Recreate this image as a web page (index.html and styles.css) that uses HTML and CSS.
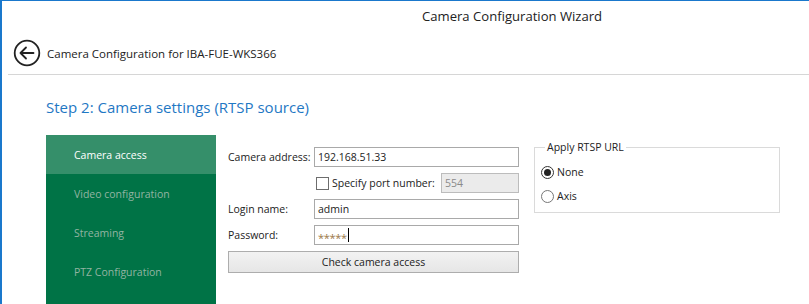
FILE: index.html
```html
<!DOCTYPE html>
<html>
<head>
<meta charset="utf-8">
<link rel="stylesheet" href="styles.css">
</head>
<body>
<div class="window">
  <div class="titlebar">Camera Configuration Wizard</div>
  <div class="nav">
    <svg class="back" width="28" height="28" viewBox="0 0 28 28">
      <circle cx="14" cy="14" r="12.3" fill="none" stroke="#222" stroke-width="1.8"/>
      <path d="M7.5 14 H20.5 M13 8.5 L7.5 14 L13 19.5" fill="none" stroke="#222" stroke-width="1.8" stroke-linecap="round" stroke-linejoin="round"/>
    </svg>
    <span class="nav-title">Camera Configuration for IBA-FUE-WKS366</span>
  </div>
  <div class="separator"></div>
  <div class="content">
    <h1 class="step">Step 2: Camera settings (RTSP source)</h1>
    <div class="body">
      <ul class="sidebar">
        <li class="item active">Camera access</li>
        <li class="item">Video configuration</li>
        <li class="item">Streaming</li>
        <li class="item">PTZ Configuration</li>
      </ul>
      <div class="form">
        <label class="label">Camera address:</label>
        <div class="input">192.168.51.33</div>
        <div class="port-row">
          <span class="checkbox"></span>
          <span class="port-label">Specify port number:</span>
          <div class="input disabled port">554</div>
        </div>
        <label class="label">Login name:</label>
        <div class="input">admin</div>
        <label class="label">Password:</label>
        <div class="input"><span class="pw">*****</span><span class="caret"></span></div>
        <button class="btn">Check camera access</button>
      </div>
      <fieldset class="group">
        <legend class="legend">Apply RTSP URL</legend>
        <div class="radio-row"><span class="radio checked"></span><span>None</span></div>
        <div class="radio-row"><span class="radio"></span><span>Axis</span></div>
      </fieldset>
    </div>
  </div>
</div>
</body>
</html>
```
FILE: styles.css
```css
* { box-sizing: border-box; }
html, body { margin: 0; padding: 0; background: #fff; }
body {
  font-family: "Open Sans", "Noto Sans", sans-serif;
  font-size: 10.5px;
  color: #222;
  overflow: hidden;
}
.window {
  height: 304px;
  border-top: 1px solid #1a78cc;
  border-left: 2px solid #1a78cc;
  display: flex;
  flex-direction: column;
}
.titlebar {
  height: 31px;
  padding: 6px 0 0 420px;
  font-size: 13.1px;
  line-height: 19px;
  color: #222;
  white-space: nowrap;
}
.nav {
  height: 42px;
  display: flex;
  align-items: center;
  padding-left: 11px;
  gap: 6px;
}
.back { display: block; flex: none; }
.nav-title { font-size: 11.5px; color: #222; white-space: nowrap; }
.separator {
  margin-left: 6px;
  border-top: 1px solid #d6d6d6;
}
.content {
  flex: 1;
  display: flex;
  flex-direction: column;
  padding-left: 44px;
}
.step {
  margin: 21px 0 17px 0;
  font-size: 15px;
  font-weight: normal;
  line-height: 22px;
  color: #1f78c4;
  white-space: nowrap;
}
.body {
  flex: 1;
  display: flex;
  align-items: flex-start;
}
.sidebar {
  list-style: none;
  margin: 0;
  padding: 0;
  width: 170px;
  align-self: stretch;
  background: #007346;
}
.item {
  height: 39px;
  display: flex;
  align-items: center;
  padding-left: 28px;
  color: #92b4a2;
  white-space: nowrap;
}
.item.active { background: #358f6a; color: #fff; }
.form {
  margin: 12px 0 0 12px;
  width: 291px;
  display: grid;
  grid-template-columns: 86px 205px;
  grid-template-rows: 20px 20px 20px 20px 22px;
  row-gap: 6px;
}
.label {
  display: flex;
  align-items: center;
  white-space: nowrap;
  color: #222;
}
.input {
  border: 1px solid #a9a9a9;
  background: #fff;
  padding: 0 3px;
  display: flex;
  align-items: center;
  white-space: nowrap;
}
.input.disabled { background: #ebebeb; border-color: #bcbcbc; color: #8a8a8a; }
.port-row {
  grid-column: 2;
  display: flex;
  align-items: center;
}
.checkbox {
  width: 13px;
  height: 13px;
  border: 1px solid #6d6d6d;
  background: #fff;
  margin-left: 2px;
  flex: none;
}
.port-label { margin-left: 3px; white-space: nowrap; }
.port { margin-left: auto; width: 78px; height: 20px; }
.pw { color: #9a7748; letter-spacing: -0.3px; font-size: 11px; position: relative; top: 2px; }
.caret { width: 1px; height: 14px; background: #000; margin-left: 1px; }
.btn {
  grid-column: 1 / 3;
  font: inherit;
  color: #222;
  border: 1px solid #adadad;
  background: linear-gradient(#f2f2f2, #e6e6e6);
  padding: 0;
}
.group {
  margin: 5px 0 0 15px;
  width: 246px;
  padding: 0 6px 4px 6px;
  border: 1px solid #dadada;
}
.legend {
  margin-left: 4px;
  padding: 0 2px;
  line-height: 14px;
  color: #222;
}
.radio-row {
  height: 24px;
  display: flex;
  align-items: center;
  gap: 3px;
}
.radio-row:first-of-type { margin-top: 6px; }
.radio {
  width: 13px;
  height: 13px;
  border: 1px solid #777;
  border-radius: 50%;
  background: #fff;
  flex: none;
  display: flex;
  align-items: center;
  justify-content: center;
}
.radio.checked { border-color: #333; }
.radio.checked::after {
  content: "";
  width: 7px;
  height: 7px;
  border-radius: 50%;
  background: #222;
}
```
